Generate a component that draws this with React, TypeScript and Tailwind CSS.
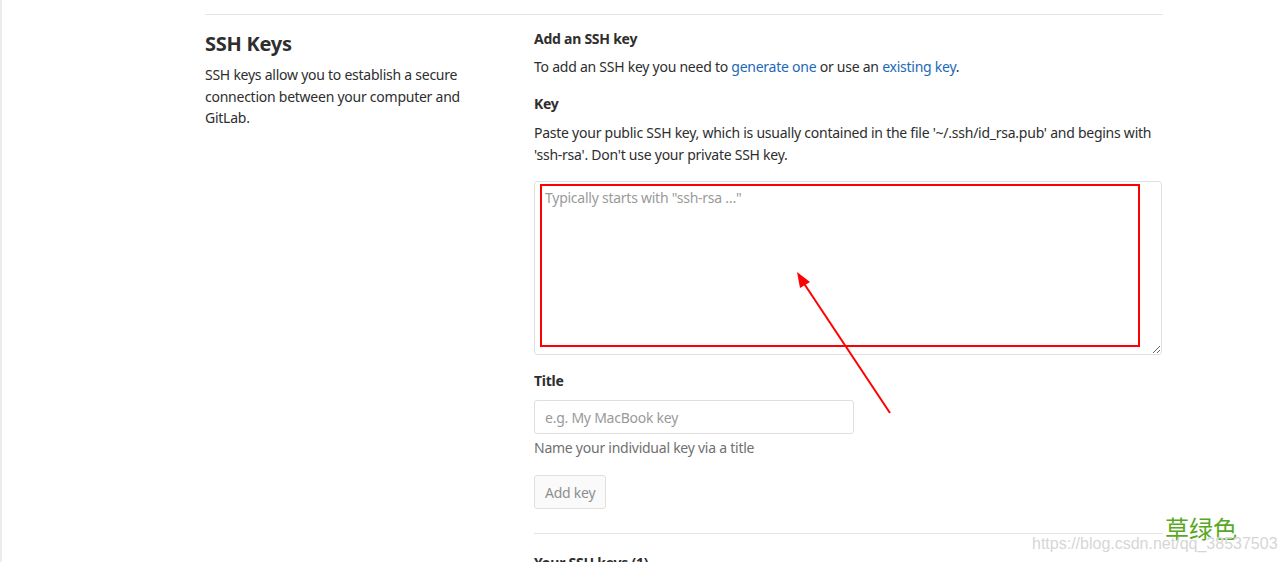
import React from 'react';

const font = { fontFamily: '"Noto Sans", "Noto Sans CJK SC", sans-serif', letterSpacing: '-0.25px' };

function Annotation() {
  // red highlight box and pointer drawn over the key field
  return (
    <>
      <div className="pointer-events-none absolute left-[538px] top-[184px] h-[163px] w-[600px] border-2 border-[#ff0000]" />
      <svg
        className="pointer-events-none absolute -left-[2px] top-0"
        width="1285"
        height="562"
        viewBox="0 0 1285 562"
      >
        <line x1="890" y1="413" x2="803" y2="282" stroke="#ff0000" strokeWidth="2" />
        <polygon points="797,272 810,282 800,288" fill="#ff0000" />
      </svg>
    </>
  );
}

function Watermark() {
  return (
    <>
      <span
        className="pointer-events-none absolute left-[1163px] top-[513px] text-[24px] leading-[30px] text-[#57a81e]"
        style={{ fontFamily: '"Noto Sans CJK SC", sans-serif', letterSpacing: 0 }}
      >
        草绿色
      </span>
      <span
        className="pointer-events-none absolute left-[1030px] top-[534px] text-[16px] leading-[20px] text-[#d6d6d6]"
        style={{ fontFamily: '"Liberation Sans", Arial, sans-serif', letterSpacing: 0, textShadow: '0 0 1px #fff' }}
      >
        https://blog.csdn.net/qq_38537503
      </span>
    </>
  );
}

export default function App() {
  return (
    <div className="relative h-[562px] overflow-hidden border-l-2 border-[#ececec] bg-white text-[#2e2e2e]" style={font}>
      <div className="ml-[203px] w-[958px]">
        <div className="mt-[14px] border-t border-[#e5e5e5]" />

        <div className="flex">
          {/* section description */}
          <div className="w-[329px] shrink-0 pr-[15px]">
            <h4 className="mt-[15px] text-[20px] font-bold leading-[28px]">SSH Keys</h4>
            <p className="mt-[6px] w-[300px] text-[14px] leading-[21.5px]">
              SSH keys allow you to establish a secure connection between your computer and GitLab.
            </p>
          </div>

          {/* add key form */}
          <div className="flex-1 pt-[14px]">
            <h5 className="text-[14px] font-bold leading-[20px]">Add an SSH key</h5>
            <p className="mt-[7px] text-[14px] leading-[21px]">
              To add an SSH key you need to{' '}
              <a href="#" className="text-[#1b69b6]">generate one</a> or use an{' '}
              <a href="#" className="text-[#1b69b6]">existing key</a>.
            </p>

            <label className="mt-[17px] block text-[14px] font-bold leading-[20px]">Key</label>
            <p className="mt-[8px] text-[14px] leading-[22px]">
              Paste your public SSH key, which is usually contained in the file '~/.ssh/id_rsa.pub' and begins with
              'ssh-rsa'. Don't use your private SSH key.
            </p>
            <textarea
              className="mt-[15px] block h-[174px] w-[628px] rounded-[3px] border border-[#dfdfdf] px-[10px] py-[6px] text-[14px] leading-[20px] outline-none placeholder:text-[#9a9a9a]"
              placeholder={'Typically starts with "ssh-rsa …"'}
            />

            <label className="mt-[16px] block text-[14px] font-bold leading-[20px]">Title</label>
            <input
              className="mt-[9px] block h-[34px] w-[320px] rounded-[3px] border border-[#dfdfdf] px-[10px] text-[14px] outline-none placeholder:text-[#9a9a9a]"
              placeholder="e.g. My MacBook key"
            />
            <p className="mt-[4px] text-[14px] leading-[20px] text-[#707070]">Name your individual key via a title</p>

            <button
              disabled
              className="mt-[17px] block h-[34px] rounded-[3px] border border-[#e0e0e0] bg-[#fafafa] px-[10px] text-[14px] text-[#8f8f8f]"
            >
              Add key
            </button>

            <div className="mt-[24px] border-t border-[#e5e5e5]" />
            <h5 className="mt-[19px] text-[14px] font-bold leading-[20px]">Your SSH keys (1)</h5>
          </div>
        </div>
      </div>

      <Annotation />
      <Watermark />
    </div>
  );
}
